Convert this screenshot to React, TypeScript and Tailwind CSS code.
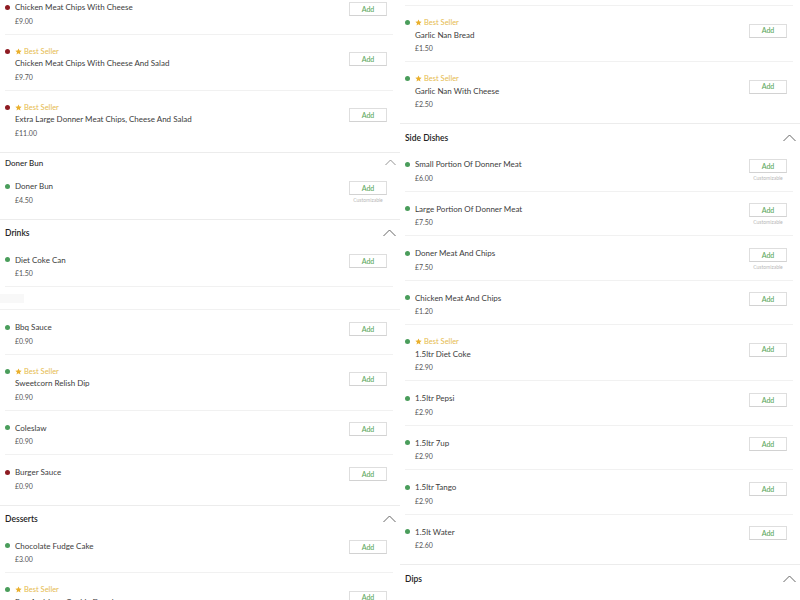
import React from "react";

type Item = {
  name: string;
  price: string;
  veg: boolean;
  best?: boolean;
  custom?: boolean;
};

type Block =
  | { kind: "top"; h: number }
  | { kind: "header"; title: string; small?: boolean }
  | { kind: "ghost" }
  | { kind: "items"; items: Item[]; end?: boolean };

const leftCol: Block[] = [
  {
    kind: "items",
    end: true,
    items: [
      { name: "Chicken Meat Chips With Cheese", price: "£9.00", veg: false },
      { name: "Chicken Meat Chips With Cheese And Salad", price: "£9.70", veg: false, best: true },
      { name: "Extra Large Donner Meat Chips, Cheese And Salad", price: "£11.00", veg: false, best: true },
    ],
  },
  { kind: "header", title: "Doner Bun", small: true },
  { kind: "items", end: true, items: [{ name: "Doner Bun", price: "£4.50", veg: true, custom: true }] },
  { kind: "header", title: "Drinks" },
  { kind: "items", items: [{ name: "Diet Coke Can", price: "£1.50", veg: true }] },
  { kind: "ghost" },
  {
    kind: "items",
    end: true,
    items: [
      { name: "Bbq Sauce", price: "£0.90", veg: true },
      { name: "Sweetcorn Relish Dip", price: "£0.90", veg: true, best: true },
      { name: "Coleslaw", price: "£0.90", veg: true },
      { name: "Burger Sauce", price: "£0.90", veg: false },
    ],
  },
  { kind: "header", title: "Desserts" },
  {
    kind: "items",
    items: [
      { name: "Chocolate Fudge Cake", price: "£3.00", veg: true },
      { name: "Ben And Jerry Cookie Dough", price: "£5.50", veg: true, best: true },
    ],
  },
];

const rightCol: Block[] = [
  { kind: "top", h: 6 },
  {
    kind: "items",
    end: true,
    items: [
      { name: "Garlic Nan Bread", price: "£1.50", veg: true, best: true },
      { name: "Garlic Nan With Cheese", price: "£2.50", veg: true, best: true },
    ],
  },
  { kind: "header", title: "Side Dishes" },
  {
    kind: "items",
    end: true,
    items: [
      { name: "Small Portion Of Donner Meat", price: "£6.00", veg: true, custom: true },
      { name: "Large Portion Of Donner Meat", price: "£7.50", veg: true, custom: true },
      { name: "Doner Meat And Chips", price: "£7.50", veg: true, custom: true },
      { name: "Chicken Meat And Chips", price: "£1.20", veg: true },
      { name: "1.5ltr Diet Coke", price: "£2.90", veg: true, best: true },
      { name: "1.5ltr Pepsi", price: "£2.90", veg: true },
      { name: "1.5ltr 7up", price: "£2.90", veg: true },
      { name: "1.5ltr Tango", price: "£2.90", veg: true },
      { name: "1.5lt Water", price: "£2.60", veg: true },
    ],
  },
  { kind: "header", title: "Dips" },
];

function Chevron({ small }: { small?: boolean }) {
  return small ? (
    <svg width="11" height="7" viewBox="0 0 11 7" className="block">
      <polyline points="0.5,6 5.5,1 10.5,6" fill="none" stroke="#888" strokeWidth="0.9" />
    </svg>
  ) : (
    <svg width="13" height="8" viewBox="0 0 13 8" className="block">
      <polyline points="0.5,7 6.5,1 12.5,7" fill="none" stroke="#666" strokeWidth="1" />
    </svg>
  );
}

function Star() {
  return (
    <svg width="7" height="7" viewBox="0 0 24 24" className="block">
      <path d="M12 1.5l3.2 7 7.6.8-5.7 5.1 1.6 7.5L12 18l-6.7 3.9 1.6-7.5L1.2 9.3l7.6-.8z" fill="#eab02d" />
    </svg>
  );
}

function Row({ item, last }: { item: Item; last: boolean }) {
  return (
    <div className={`flex items-center justify-between pt-[11px] pb-[7px] pr-[6px] ${last ? "" : "border-b border-[#f1f1f1]"}`}>
      <div className="flex">
        <div className={`flex w-[10px] items-center ${item.best ? "h-[11.5px]" : "h-[12px]"}`}>
          <span className={`block h-[5px] w-[5px] rounded-full ${item.veg ? "bg-[#4a9d5b]" : "bg-[#8e1b22]"}`} />
        </div>
        <div>
          {item.best && (
            <div className="flex h-[11.5px] items-center gap-[2px]">
              <Star />
              <span className="text-[7.5px] leading-[11px] text-[#e6bb4f]">Best Seller</span>
            </div>
          )}
          <div className="text-[8px] leading-[12px] text-[#3c3c3c]">{item.name}</div>
          <div className="mt-[1.5px] text-[7px] leading-[12px] text-[#555]">{item.price}</div>
        </div>
      </div>
      <div className="flex h-[24px] w-[38px] flex-col items-center">
        <div className="flex h-[14px] w-[38px] items-center justify-center border border-[#dedede] border-b-[#d2d2d2] bg-white text-[7px] font-medium text-[#5aa65a]">
          Add
        </div>
        {item.custom && <div className="mt-[1px] text-[5px] leading-[8px] text-[#b8b8b8]">Customizable</div>}
      </div>
    </div>
  );
}

function Column({ blocks, className }: { blocks: Block[]; className: string }) {
  return (
    <div className={`w-[400px] ${className}`}>
      {blocks.map((b, i) => {
        if (b.kind === "top") return <div key={i} style={{ height: b.h }} className="ml-[5px] mr-[7px] border-b border-[#f1f1f1]" />;
        if (b.kind === "ghost")
          return (
            <div key={i} className="h-[23px] border-b border-[#f1f1f1] pt-[7px]">
              <div className="h-[9px] w-[24px] bg-[#f8f8f8]" />
            </div>
          );
        if (b.kind === "header")
          return b.small ? (
            <div key={i} className="flex h-[16.5px] items-center justify-between pl-[5px] pr-[4px] pt-[4px]">
              <span className="text-[8px] font-medium leading-[12px] text-[#2a2a2a]">{b.title}</span>
              <Chevron small />
            </div>
          ) : (
            <div key={i} className="flex h-[23px] items-center justify-between pl-[5px] pr-[4px] pt-[4px]">
              <span className="text-[8.5px] font-semibold leading-[12px] text-[#222]">{b.title}</span>
              <Chevron />
            </div>
          );
        return (
          <div key={i} className={b.end ? "border-b border-[#ececec] pb-[6px]" : ""}>
            <div className="pl-[5px] pr-[7px]">
              {b.items.map((it, j) => (
                <Row key={it.name} item={it} last={b.end === true && j === b.items.length - 1} />
              ))}
            </div>
          </div>
        );
      })}
    </div>
  );
}

export default function App() {
  return (
    <div className="h-[600px] w-[800px] overflow-hidden bg-white font-['Lato',sans-serif]">
      <div className="flex items-start">
        <Column blocks={leftCol} className="-mt-[10px]" />
        <Column blocks={rightCol} className="" />
      </div>
    </div>
  );
}
